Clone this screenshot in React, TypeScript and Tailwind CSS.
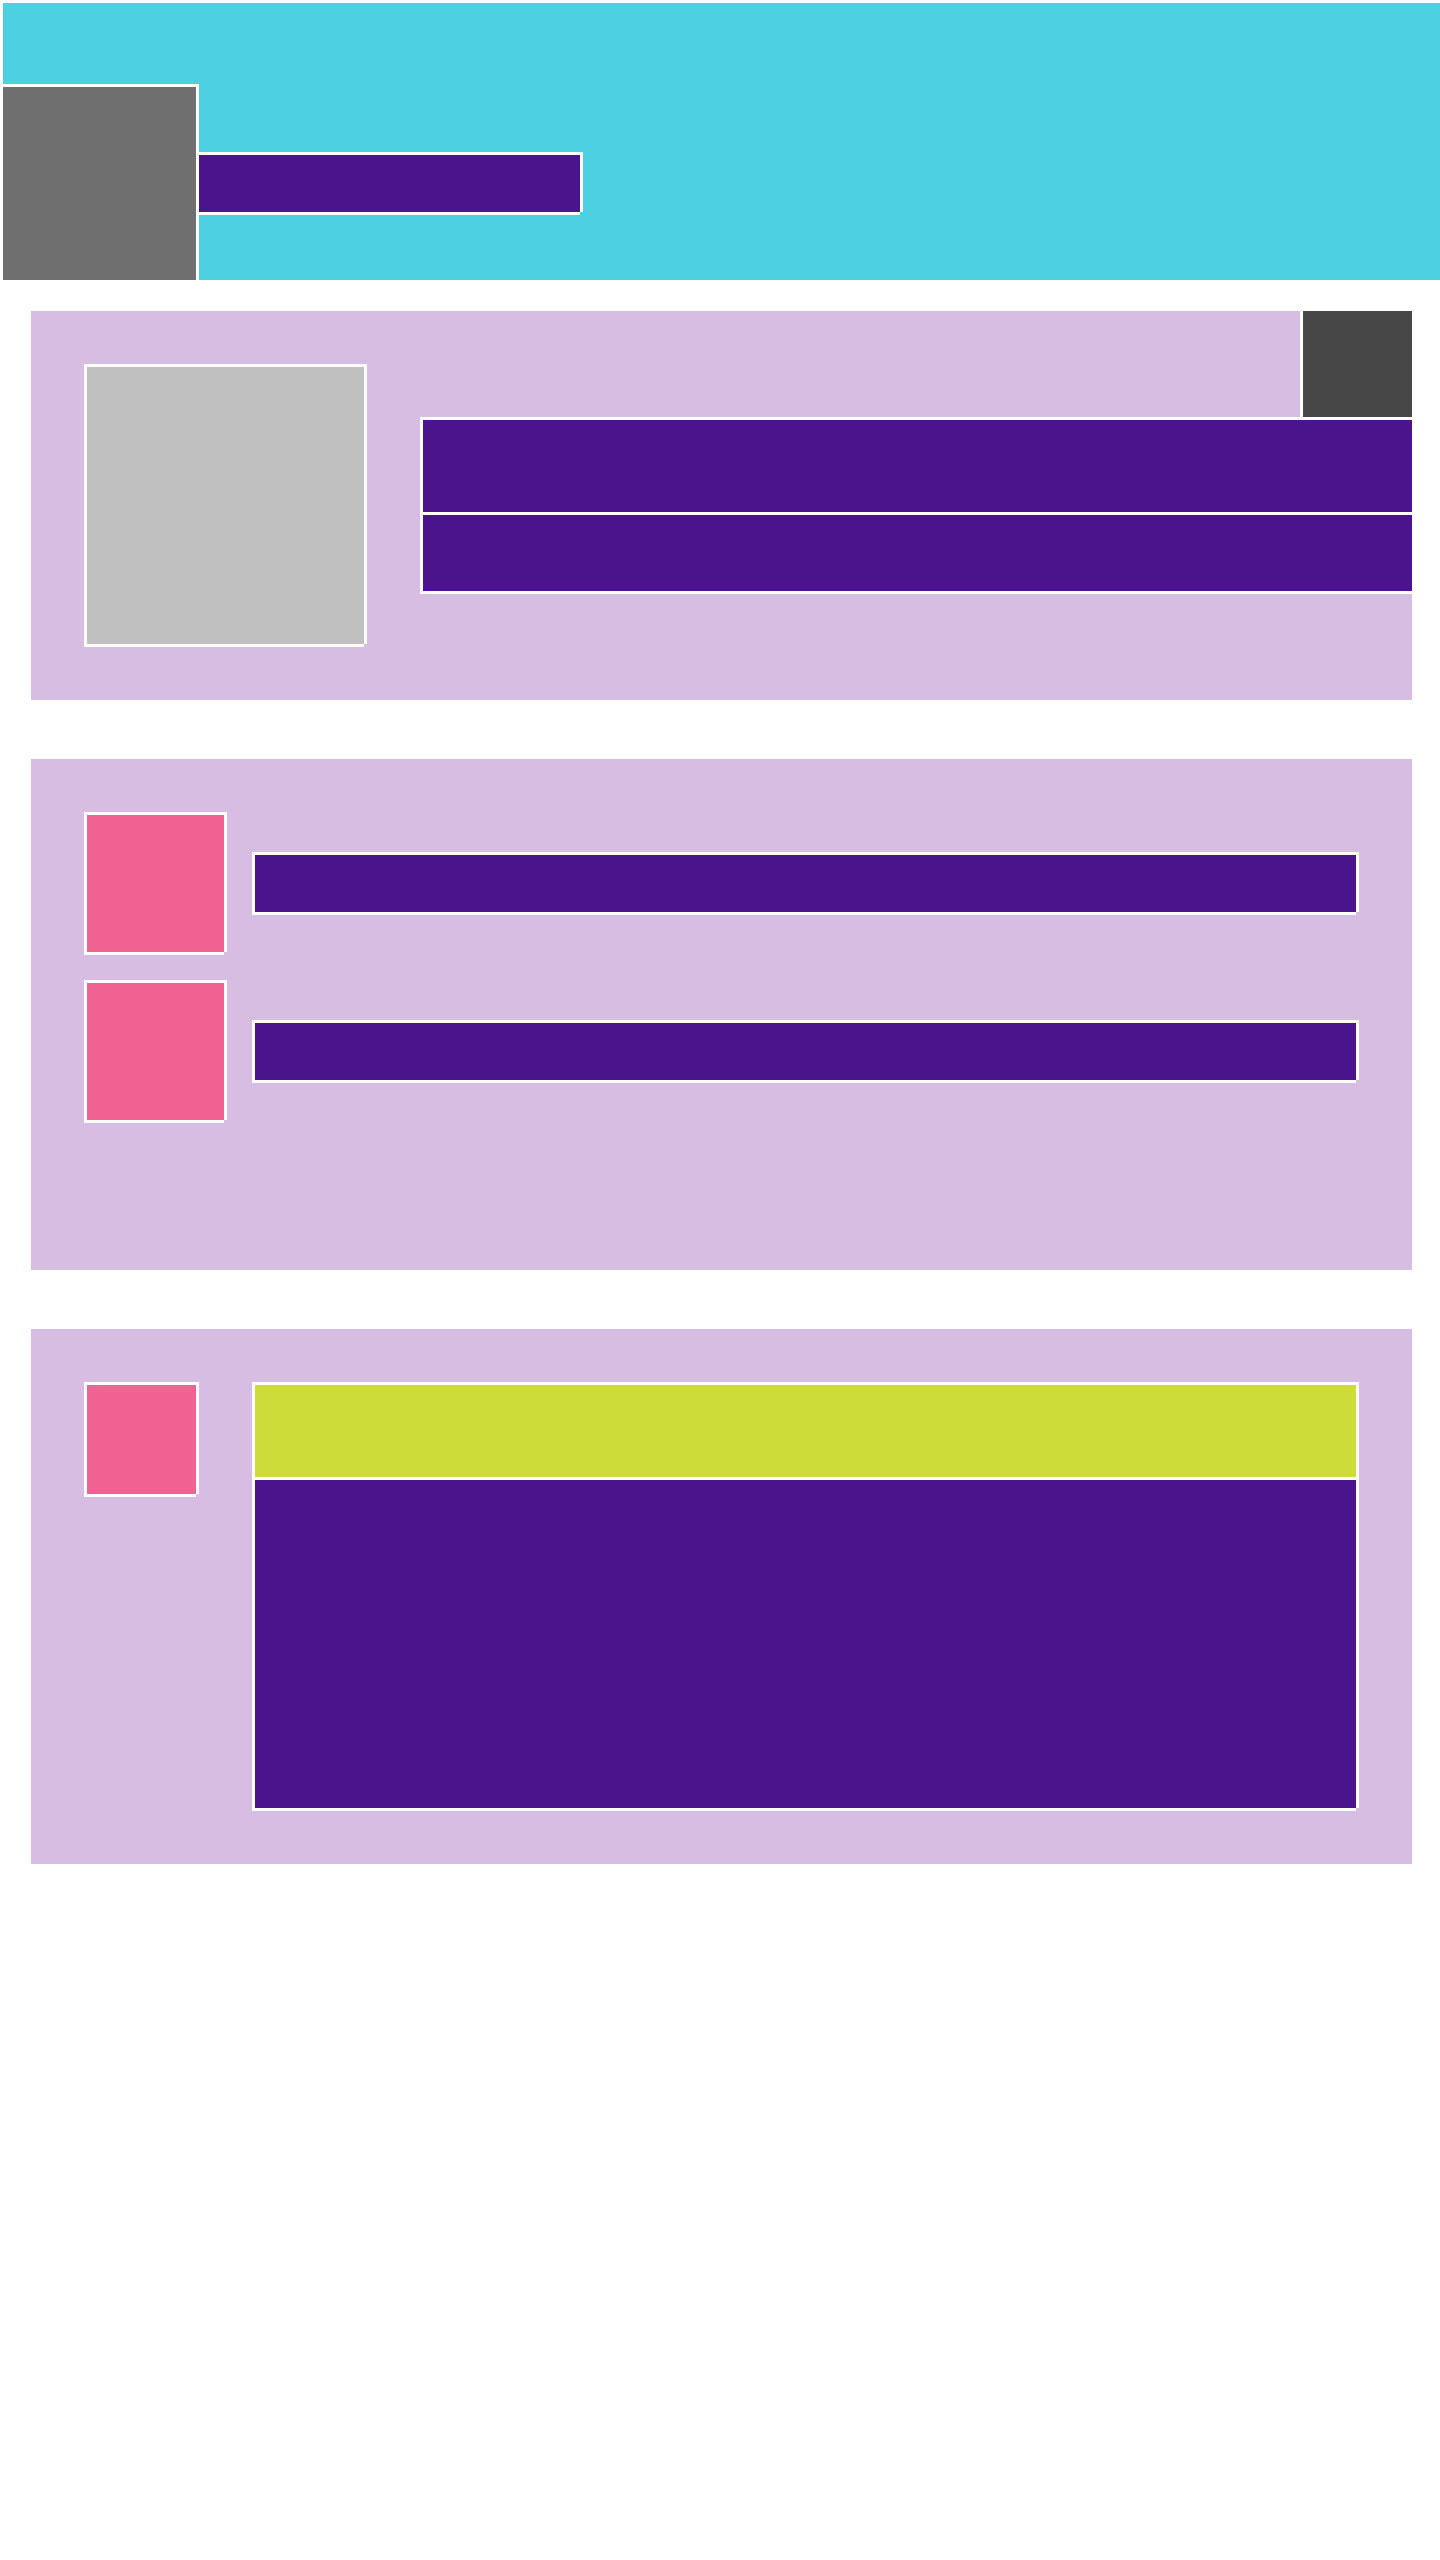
const box = 'border-l-[3px] border-t-[3px] border-white shadow-[3px_0_0_#fff,0_3px_0_#fff]';

function Block({ className }: { className: string }) {
  return <div className={`${box} shrink-0 ${className}`} />;
}

function ListRow() {
  return (
    <div className="flex items-center gap-[28px]">
      <Block className="w-[140px] h-[140px] bg-[#f06292]" />
      <Block className="flex-1 h-[60px] bg-[#4a148c]" />
    </div>
  );
}

export default function App() {
  return (
    <div className="min-h-[2560px] bg-white font-['Liberation_Sans',sans-serif]">
      {/* header */}
      <header className={`${box} h-[280px] bg-[#4dd0e1] pt-[81px] flex items-center`}>
        <Block className="-ml-[3px] w-[196px] h-[196px] bg-[#6f6f6f]" />
        <Block className="w-[384px] h-[60px] bg-[#4a148c]" />
      </header>

      <main className="px-[28px] pt-[28px] flex flex-col gap-[56px]">
        {/* profile card */}
        <section className={`${box} relative bg-[#d7bde2] pt-[53px] pl-[53px] pr-[56px] pb-[56px] flex items-center gap-[56px]`}>
          <Block className="w-[280px] h-[280px] bg-[#c0c0c0]" />
          <div className="flex-1 -mr-[56px] flex flex-col">
            <Block className="h-[95px] bg-[#4a148c]" />
            <Block className="h-[79px] bg-[#4a148c]" />
          </div>
          <Block className="absolute -top-[3px] right-0 w-[112px] h-[109px] bg-[#474747]" />
        </section>

        {/* list card */}
        <section className={`${box} h-[514px] bg-[#d7bde2] pt-[53px] pl-[53px] pr-[56px] flex flex-col gap-[28px]`}>
          <ListRow />
          <ListRow />
        </section>

        {/* detail card */}
        <section className={`${box} bg-[#d7bde2] pt-[53px] pl-[53px] pr-[56px] pb-[56px] flex items-start gap-[56px]`}>
          <Block className="w-[112px] h-[112px] bg-[#f06292]" />
          <div className="flex-1 flex flex-col">
            <Block className="h-[95px] bg-[#cddc39]" />
            <Block className="h-[331px] bg-[#4a148c]" />
          </div>
        </section>
      </main>
    </div>
  );
}
